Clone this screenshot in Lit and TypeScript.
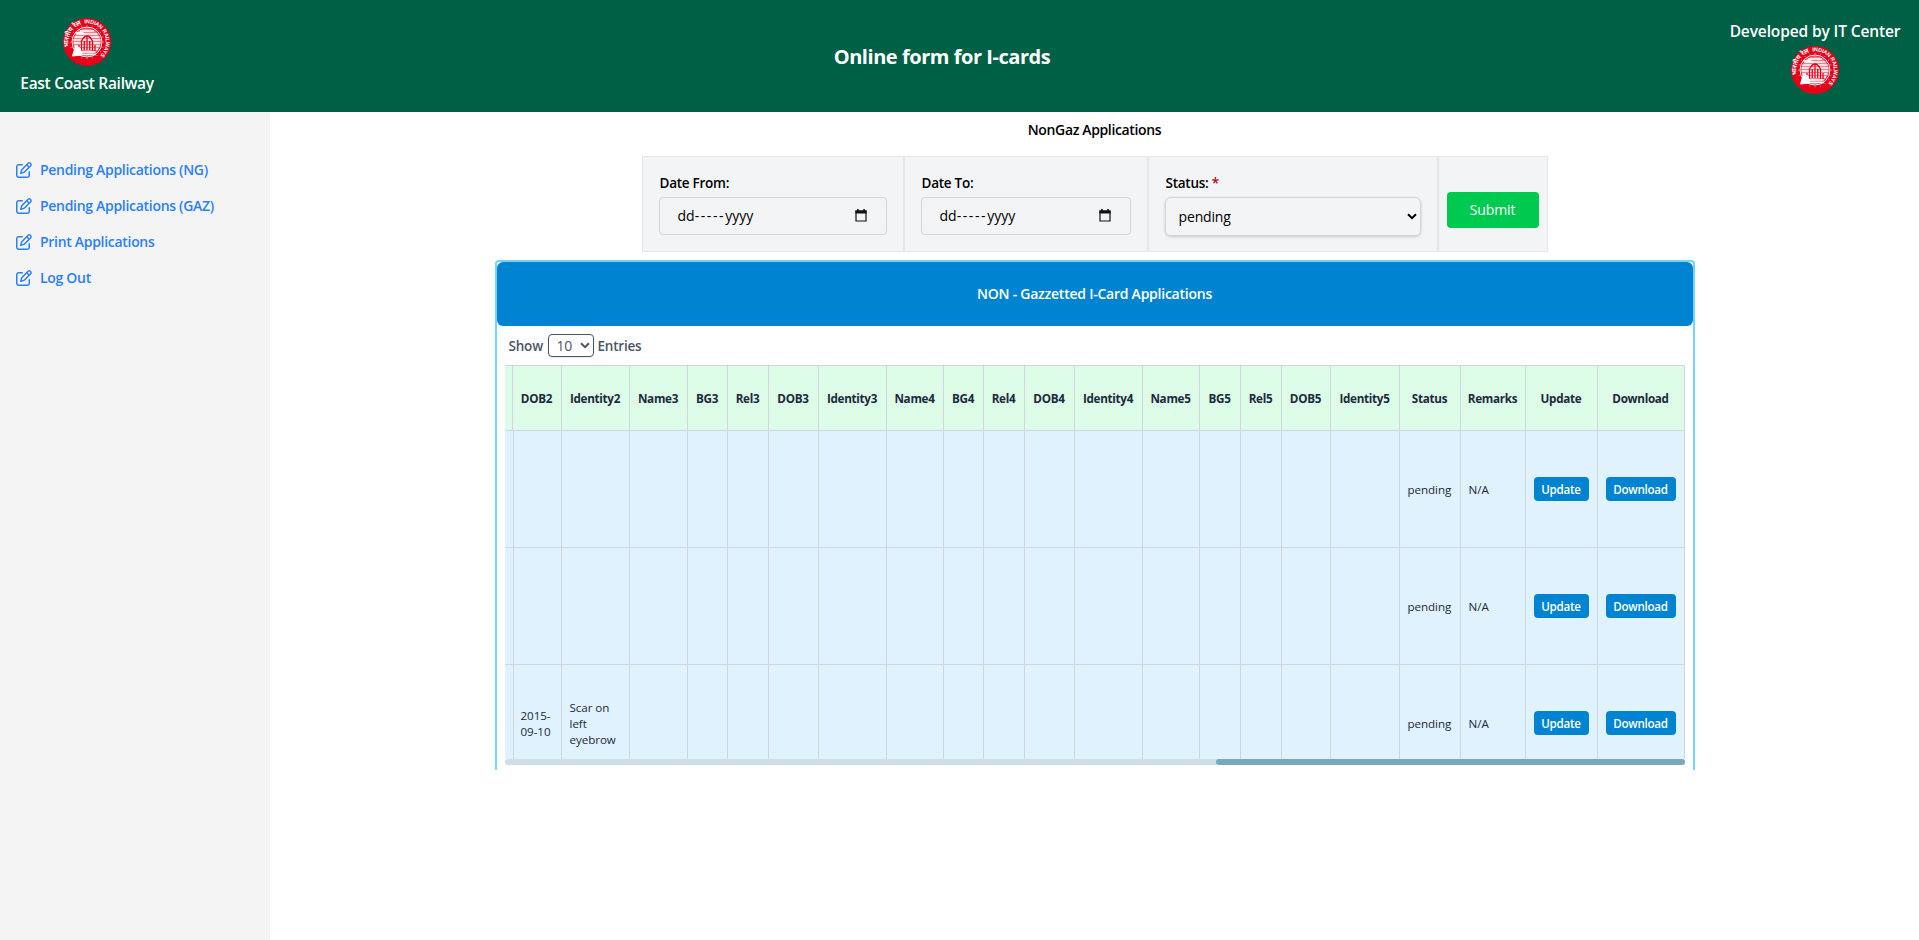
import { LitElement, html, css, svg } from "lit";
import { customElement } from "lit/decorators.js";

const spokes = Array.from({ length: 20 }, (_, i) => i * 18);

const logo = html`<svg class="logo" viewBox="0 0 96 96">
  <defs>
    <path id="arc-l" d="M12.1 58 A37.3 37.3 0 0 1 44 10.9" />
    <path id="arc-r" d="M43 11 A37.3 37.3 0 0 1 66 80.7" />
  </defs>
  <circle cx="48" cy="48" r="48" fill="#e60019" />
  <text class="lt hi"><textPath href="#arc-l">भारतीय रेल</textPath></text>
  <text class="lt"><textPath href="#arc-r">INDIAN RAILWAYS</textPath></text>
  ${spokes.map((a) => svg`<circle cx="48" cy="14.5" r="1" fill="#fff" opacity=".7" transform="rotate(${a} 48 48)" />`)}
  <circle cx="48" cy="48" r="30" fill="none" stroke="#fff" stroke-width="2" />
  <circle cx="48" cy="48" r="27.5" fill="#f0808c" />
  <path d="M34 26h28M27 32h42M23 38h50M21 44h54M21 50h54M23 56h50M26 62h44M31 68h34" stroke="#fff" stroke-width="3.2" />
  <path d="M37 66V46q11-20 22 0v20M48 36v28M42.5 46v18M53.5 46v18M32 54v12M64 54v12" fill="none" stroke="#e60019" stroke-width="2.6" />
  <path d="M24 30q14-5 22 4M19 76l6-20 9 4 4 14z" fill="#fff" stroke="#fff" stroke-width="2" />
  <path d="M30 73h36" stroke="#fff" stroke-width="3" />
</svg>`;

const editIcon = html`<svg class="edit" viewBox="0 0 512 512" fill="currentColor">
  <path d="M441 58.9L453.1 71c9.4 9.4 9.4 24.6 0 33.9L424 134.1 377.9 88 407 58.9c9.4-9.4 24.6-9.4 33.9 0zM209.8 256.2L344 121.9 390.1 168 255.8 302.2c-2.9 2.9-6.5 5-10.4 6.1l-58.5 16.7 16.7-58.5c1.1-3.9 3.2-7.5 6.1-10.4zM373.1 25L175.8 222.2c-8.7 8.7-15 19.4-18.3 31.1l-28.6 100c-2.4 8.4-.1 17.4 6.1 23.6s15.2 8.5 23.6 6.1l100-28.6c11.8-3.4 22.5-9.7 31.1-18.3L487 138.9c28.1-28.1 28.1-73.7 0-101.8L474.9 25C446.8-3.1 401.2-3.1 373.1 25zM88 64C39.4 64 0 103.4 0 152V424c0 48.6 39.4 88 88 88H360c48.6 0 88-39.4 88-88V312c0-13.3-10.7-24-24-24s-24 10.7-24 24V424c0 22.1-17.9 40-40 40H88c-22.1 0-40-17.9-40-40V152c0-22.1 17.9-40 40-40H200c13.3 0 24-10.7 24-24s-10.7-24-24-24H88z" />
</svg>`;

const chevron = html`<svg class="chev" viewBox="0 0 10 7"><path d="M1 1.2 5 5.2 9 1.2" fill="none" stroke="currentColor" stroke-width="2" /></svg>`;
const calendar = html`<svg class="cal" viewBox="0 0 12 13"><path d="M1 2.2h10v9.8H1z" fill="none" stroke="#111" stroke-width="1.2" /><path d="M.4 1.5h11.2v3H.4zM2.2 0h1.5v2H2.2zM8.3 0h1.5v2H8.3z" fill="#111" /></svg>`;

const links = ["Pending Applications (NG)", "Pending Applications (GAZ)", "Print Applications", "Log Out"];
const columns = ["", "DOB2", "Identity2", "Name3", "BG3", "Rel3", "DOB3", "Identity3", "Name4", "BG4", "Rel4", "DOB4", "Identity4", "Name5", "BG5", "Rel5", "DOB5", "Identity5", "Status", "Remarks", "Update", "Download"];
const rows: Record<string, string>[] = [{}, {}, { DOB2: "2015-09-10", Identity2: "Scar on left eyebrow" }];

@customElement("app-root")
export class AppRoot extends LitElement {
  static styles = css`
    :host { display: block; height: 940px; overflow: hidden; background: #fff; color: #000; font-family: "Open Sans", "Noto Sans", sans-serif; font-size: 14px; }
    * { box-sizing: border-box; }
    .top { height: 112px; background: #006045; color: #fff; display: flex; justify-content: space-between; align-items: center; padding: 0 19px 0 20px; font-weight: 600; font-size: 15.5px; }
    .brand { display: flex; flex-direction: column; align-items: center; height: 112px; white-space: nowrap; }
    .left { width: 134px; padding-top: 18px; }
    .right { width: 170px; padding-top: 19px; }
    .left .name { line-height: 24px; margin-top: 5px; letter-spacing: -.3px; }
    .right .name { line-height: 24px; margin-bottom: 3px; letter-spacing: -.12px; }
    .logo { width: 48px; height: 48px; display: block; flex: none; }
    .lt { fill: #fff; font: 700 11px "Liberation Sans", "Noto Sans", sans-serif; letter-spacing: -.3px; }
    .hi { font-size: 13px; }
    .title { font-size: 20px; font-weight: 700; letter-spacing: -.45px; white-space: nowrap; line-height: 28px; margin-top: 2px; }
    .body { display: flex; height: 828px; }
    .side { width: 270px; background: #f4f4f4; padding: 46px 0 0 16px; }
    .link { display: flex; align-items: center; gap: 8px; height: 24px; margin-bottom: 12px; color: #2b7fff; font-weight: 600; letter-spacing: -.3px; }
    .link span { line-height: 20px; padding-bottom: 1px; }
    .edit { width: 16px; height: 16px; }
    .main { flex: 1; display: flex; flex-direction: column; align-items: center; }
    .heading { height: 44px; padding-top: 8px; line-height: 20px; font-weight: 600; letter-spacing: -.36px; flex: none; }
    .filters { display: grid; grid-template-columns: 262px 244px 290px 110px; grid-template-rows: 96px; height: 96px; background: #f3f4f6; flex: none; }
    .cell { border: 1px solid #e5e7eb; padding: 16px 16px 0; }
    .cell.act { padding: 35px 8px 0; }
    .label { font-weight: 600; font-size: 13.5px; line-height: 20px; height: 24px; letter-spacing: -.26px; padding-left: 1px; }
    .req { color: #c10007; }
    .date { height: 38px; border: 1px solid #d1d5dc; border-radius: 4px; display: flex; align-items: center; justify-content: space-between; padding: 0 19px 0 18px; }
    .date span { line-height: 20px; }
    .dash { letter-spacing: 1.6px; }
    .cal { width: 12px; height: 13px; margin-bottom: 1px; }
    .select { height: 39px; border: 1px solid #d1d5dc; border-radius: 6px; box-shadow: 0 1px 3px rgba(0,0,0,.18); display: flex; align-items: center; justify-content: space-between; padding: 0 3px 0 13px; letter-spacing: -.15px; }
    .chev { width: 10px; height: 7px; }
    .submit { height: 36px; background: #00c950; color: #fff; border-radius: 4px; text-align: center; line-height: 36px; letter-spacing: -.1px; }
    .card { width: 1200px; height: 510px; margin-top: 8px; border: 2px solid #74d4ff; border-bottom: 0; border-radius: 4px 4px 0 0; flex: none; }
    .banner { height: 64px; background: #0084d1; border-radius: 6px; color: #fff; font-weight: 600; text-align: center; line-height: 63px; letter-spacing: -.24px; }
    .entries { height: 39px; display: flex; align-items: center; padding: 0 0 0 12px; gap: 4px; font-weight: 600; font-size: 13.5px; color: #4a5565; letter-spacing: -.2px; }
    .show { width: 35px; }
    .count { width: 46px; height: 23px; border: 1px solid #45556c; border-radius: 4px; display: flex; align-items: center; justify-content: space-between; padding: 0 3px 0 8px; font-weight: 400; font-size: 14px; box-shadow: 0 1px 2px rgba(0,0,0,.1); }
    .scroll { width: 1180px; height: 394px; margin-left: 8px; overflow: hidden; border-top: 1px solid #d1d5dc; }
    .row { display: grid; grid-template-columns: 8px 49px 68px 58px 40px 41px 50px 68px 57px 40px 41px 50px 68px 57px 41px 41px 49px 69px 61px 65px 72px 87px; height: 117px; background: #dff2fe; color: #1d293d; font-size: 11.6px; letter-spacing: -.05px; line-height: 16px; }
    .row.head { height: 65px; background: #dcfce7; font-weight: 700; letter-spacing: -.3px; font-size: 11.7px; }
    .td { border-right: 1px solid #d1d5dc; border-bottom: 1px solid #d1d5dc; padding: 1px 0 0 8px; display: flex; align-items: center; overflow: hidden; }
    .head .td { justify-content: center; padding: 0; white-space: nowrap; }
    .date2 { width: 34px; } .identity { width: 48px; }
    .btn { background: #0084d1; color: #fff; height: 24px; border-radius: 4px; text-align: center; line-height: 25px; font-weight: 600; letter-spacing: -.25px; margin: 0 8px 2px 0; flex: 1; }
    .track { width: 1180px; height: 6px; margin-left: 8px; background: #cddfe6; border-radius: 3px; display: flex; justify-content: flex-end; }
    .thumb { width: 469px; background: #78a9bd; border-radius: 3px; }
  `;

  private value(row: Record<string, string>, col: string) {
    if (col === "Status") return html`<span>pending</span>`;
    if (col === "Remarks") return html`<span>N/A</span>`;
    if (col === "Update" || col === "Download") return html`<span class="btn">${col}</span>`;
    return html`<span class=${col === "DOB2" ? "date2" : "identity"}>${row[col] ?? ""}</span>`;
  }

  private date(label: string) {
    return html`<div class="cell">
      <div class="label"><span>${label}</span></div>
      <div class="date"><span>dd<span class="dash">-----</span>yyyy</span>${calendar}</div>
    </div>`;
  }

  render() {
    return html`
      <header class="top">
        <div class="brand left">${logo}<span class="name">East Coast Railway</span></div>
        <div class="title">Online form for I-cards</div>
        <div class="brand right"><span class="name">Developed by IT Center</span>${logo}</div>
      </header>
      <div class="body">
        <nav class="side">${links.map((l) => html`<a class="link">${editIcon}<span>${l}</span></a>`)}</nav>
        <main class="main">
          <div class="heading">NonGaz Applications</div>
          <section class="filters">
            ${this.date("Date From:")} ${this.date("Date To:")}
            <div class="cell">
              <div class="label">Status: <span class="req">*</span></div>
              <div class="select"><span>pending</span>${chevron}</div>
            </div>
            <div class="cell act"><div class="submit">Submit</div></div>
          </section>
          <section class="card">
            <div class="banner"><span>NON - Gazzetted I-Card Applications</span></div>
            <div class="entries"><span class="show">Show</span><span class="count">10 ${chevron}</span><span>Entries</span></div>
            <div class="scroll">
              <div class="row head">${columns.map((c) => html`<div class="td"><span>${c}</span></div>`)}</div>
              ${rows.map((r) => html`<div class="row">${columns.map((c) => html`<div class="td">${this.value(r, c)}</div>`)}</div>`)}
            </div>
            <div class="track"><div class="thumb"></div></div>
          </section>
        </main>
      </div>
    `;
  }
}
